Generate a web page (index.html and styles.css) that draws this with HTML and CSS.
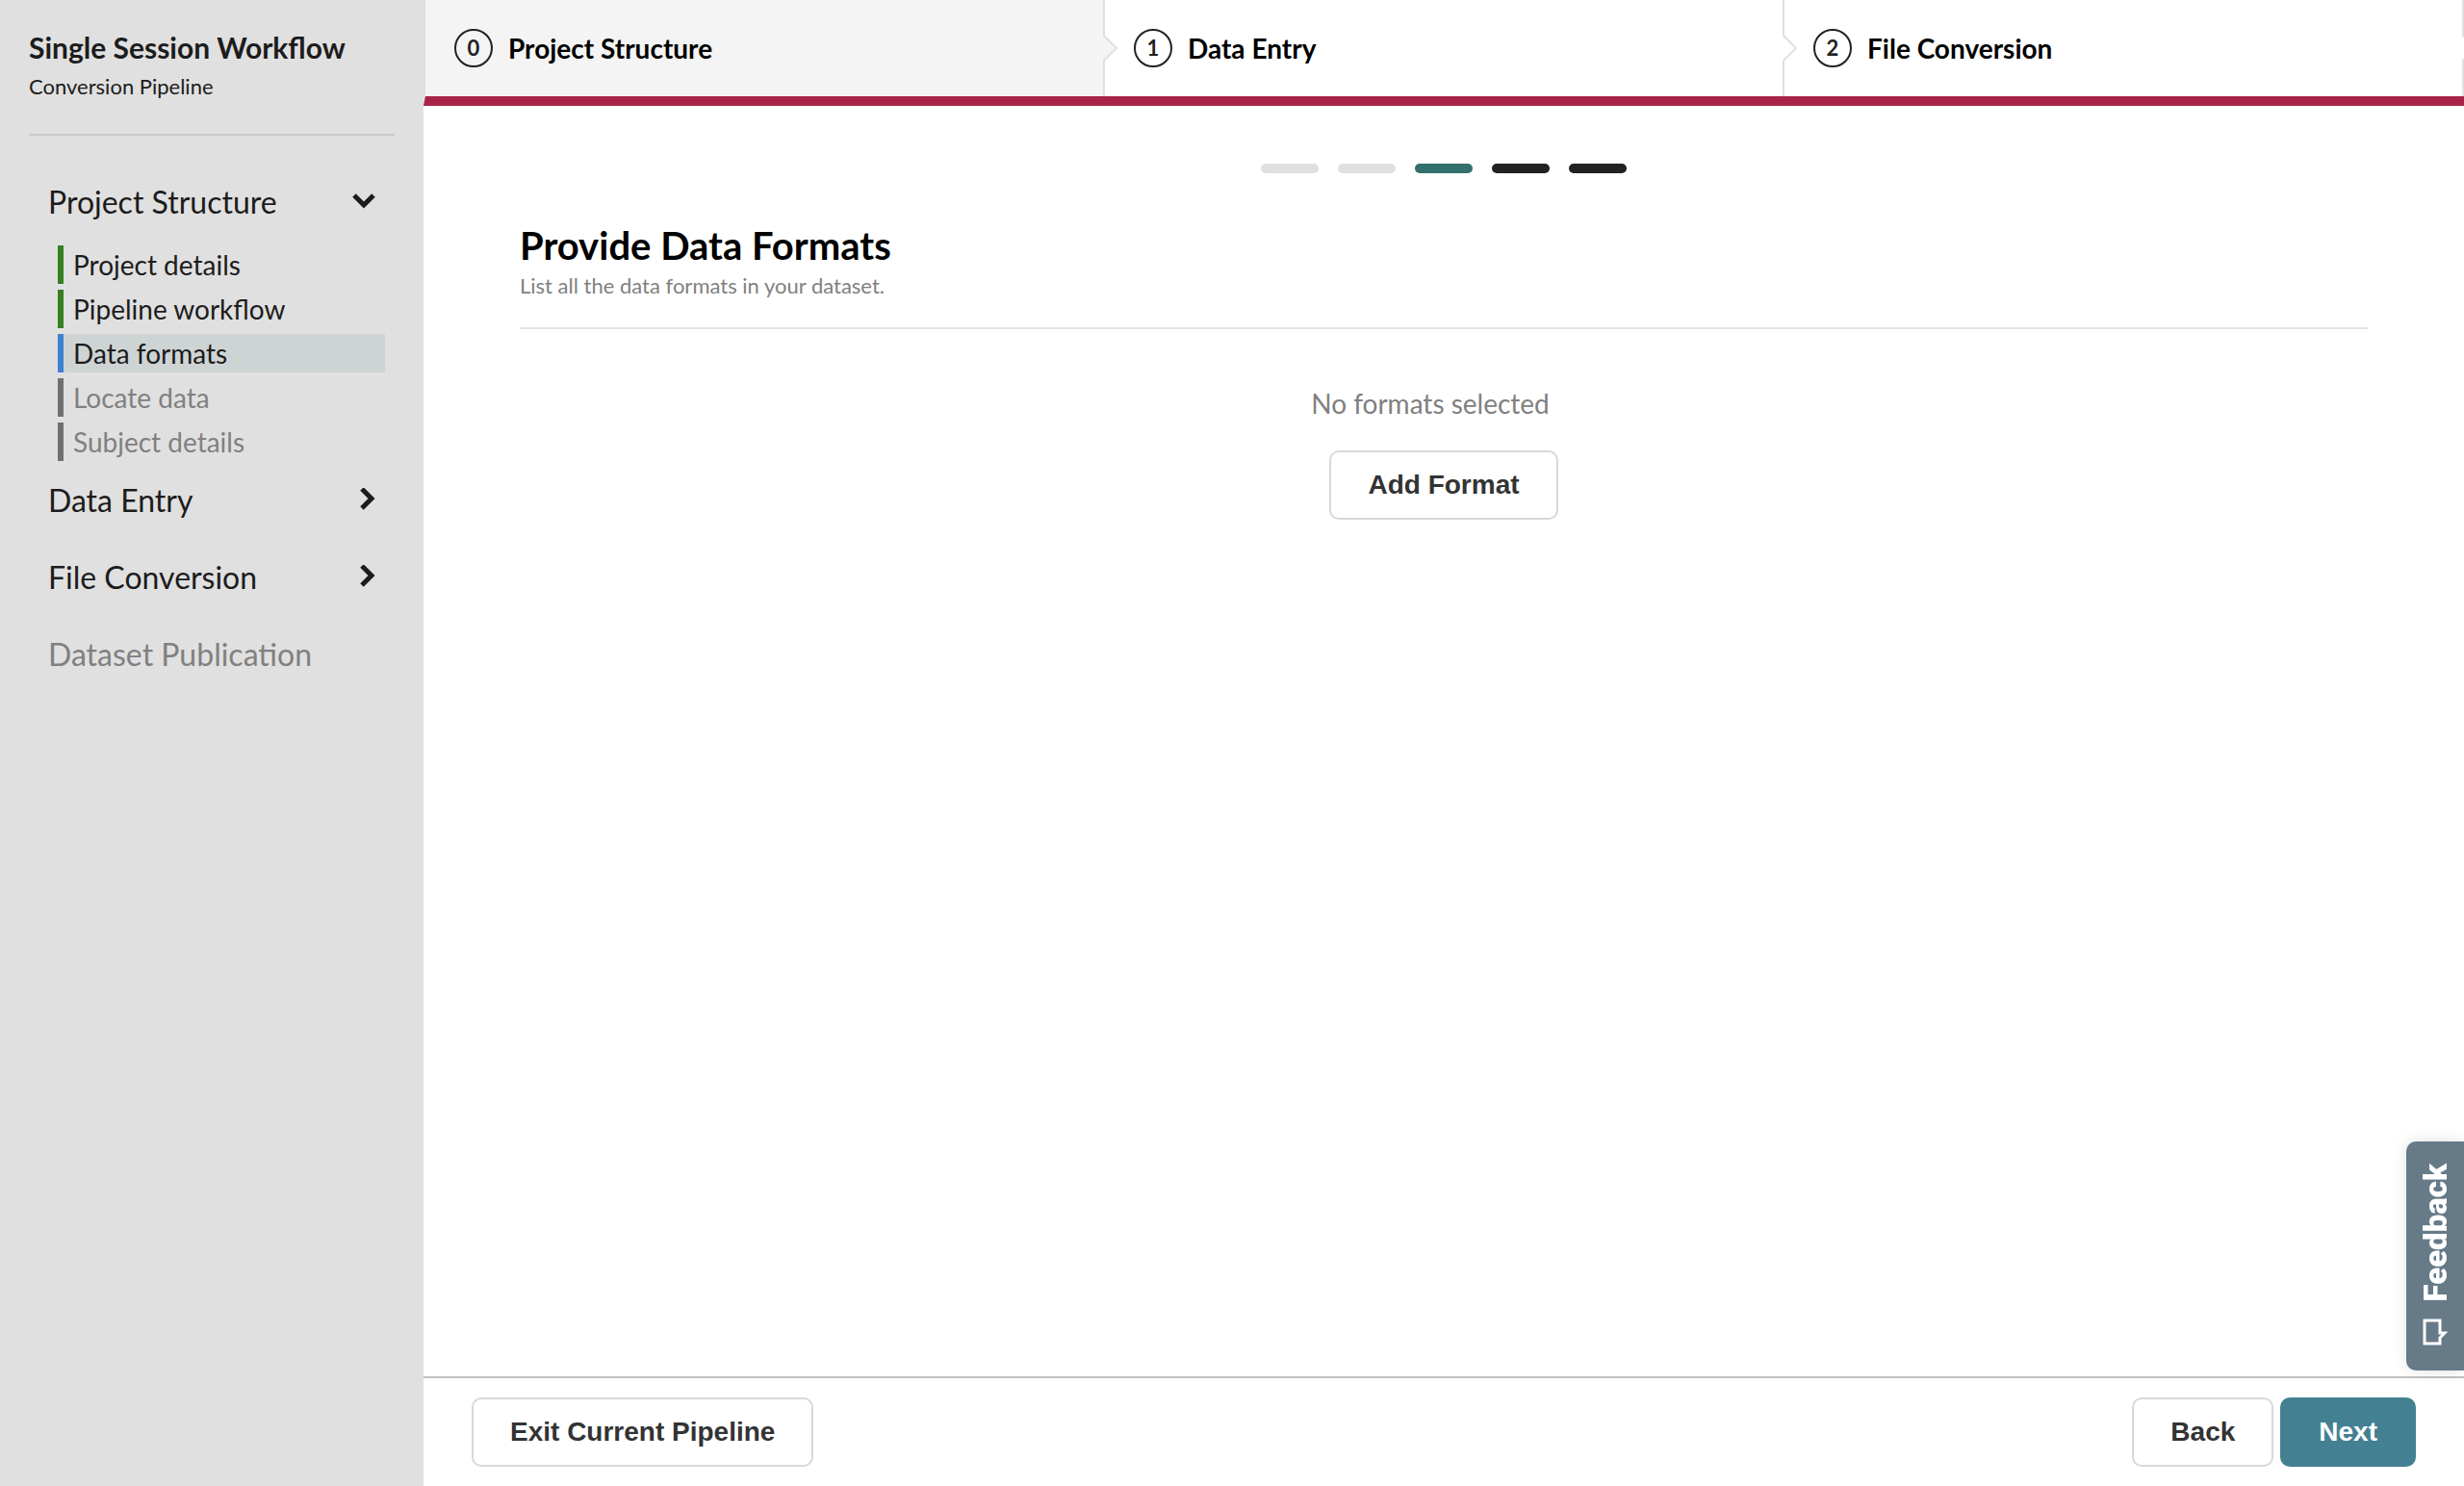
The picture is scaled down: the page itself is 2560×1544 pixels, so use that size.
FILE: index.html
```html
<!DOCTYPE html>
<html lang="en">

<head>
    <meta charset="UTF-8">
    <meta name="viewport" content="width=device-width, initial-scale=1.0">
    <title>Single Session Workflow</title>
    <link rel="stylesheet" href="styles.css">
</head>

<body>

    <aside class="sidebar">
        <header class="sidebar-header">
            <h1>Single Session Workflow</h1>
            <p>Conversion Pipeline</p>
        </header>

        <nav class="sidebar-nav">
            <button type="button" class="section" aria-expanded="true">
                Project Structure
                <svg class="chevron" width="24" height="24" viewBox="0 0 24 24"><path d="M2 6l10 10L22 6"/></svg>
            </button>
            <ul class="pages">
                <li><a href="#details" class="page done">Project details</a></li>
                <li><a href="#workflow" class="page done">Pipeline workflow</a></li>
                <li><a href="#formats" class="page active">Data formats</a></li>
                <li><a href="#locate" class="page locked">Locate data</a></li>
                <li><a href="#subjects" class="page locked">Subject details</a></li>
            </ul>
            <button type="button" class="section" aria-expanded="false">
                Data Entry
                <svg class="chevron" width="24" height="24" viewBox="0 0 24 24"><path d="M10 1l10 10-10 10"/></svg>
            </button>
            <button type="button" class="section" aria-expanded="false">
                File Conversion
                <svg class="chevron" width="24" height="24" viewBox="0 0 24 24"><path d="M10 1l10 10-10 10"/></svg>
            </button>
            <button type="button" class="section" disabled>Dataset Publication</button>
        </nav>
    </aside>

    <div class="content">
        <nav class="steps">
            <a href="#step-0" class="step current">
                <span class="step-number">0</span>
                Project Structure
                <svg class="step-arrow" width="16" height="32" viewBox="0 0 16 32"><path d="M0 2l14 14L0 30"/></svg>
            </a>
            <a href="#step-1" class="step">
                <span class="step-number">1</span>
                Data Entry
                <svg class="step-arrow" width="16" height="32" viewBox="0 0 16 32"><path d="M0 2l14 14L0 30"/></svg>
            </a>
            <a href="#step-2" class="step">
                <span class="step-number">2</span>
                File Conversion
                <svg class="step-arrow" width="16" height="32" viewBox="0 0 16 32"><path d="M0 2l14 14L0 30"/></svg>
            </a>
        </nav>

        <main class="main">
            <div class="dots">
                <span class="dot seen"></span>
                <span class="dot seen"></span>
                <span class="dot now"></span>
                <span class="dot"></span>
                <span class="dot"></span>
            </div>
            <div class="page-header">
                <h2>Provide Data Formats</h2>
                <p>List all the data formats in your dataset.</p>
            </div>
            <div class="formats">
                <p class="empty">No formats selected</p>
                <button type="button" class="btn">Add Format</button>
            </div>
        </main>

        <footer class="footer">
            <button type="button" class="btn">Exit Current Pipeline</button>
            <div class="footer-right">
                <button type="button" class="btn">Back</button>
                <button type="button" class="btn primary">Next</button>
            </div>
        </footer>
    </div>

    <button type="button" class="feedback">
        <svg width="26" height="28" viewBox="0 0 26 28"><path d="M2 2h16v13h5l-5 5v6H2z"/></svg>
        <span>Feedback</span>
    </button>

</body>

</html>
```
FILE: styles.css
```css
*{
    margin: 0;
    padding: 0;
    box-sizing: border-box;
}
body{
    display: flex;
    height: 100vh;
    overflow: hidden;
    font-family: Lato, "Open Sans", sans-serif;
    font-size: 28px;
    color: #1c1c1c;
    background: white;
}
a{
    color: inherit;
    text-decoration: none;
}
button{
    font: inherit;
    color: inherit;
    border: none;
    background: none;
    cursor: pointer;
}
svg{
    fill: none;
}

/* sidebar */
.sidebar{
    flex: 0 0 440px;
    padding: 30px;
    background: #e0e0e0;
}
.sidebar-header{
    padding-bottom: 27px;
    border-bottom: 2px solid #c8c8c8;
}
.sidebar-header h1{
    font-size: 30px;
    line-height: 38px;
}
.sidebar-header p{
    font-size: 22px;
    line-height: 44px;
}
.sidebar-nav{
    padding: 28px 20px;
}
.section{
    display: flex;
    justify-content: space-between;
    align-items: center;
    width: 100%;
    height: 80px;
    font-size: 32px;
}
.section:disabled{
    color: #808080;
}
.chevron{
    stroke: #1c1c1c;
    stroke-width: 5;
}
.pages{
    display: flex;
    flex-direction: column;
    gap: 6px;
    padding-top: 6px;
    margin: 0 -10px 0 10px;
    list-style: none;
}
.page{
    display: block;
    padding-left: 10px;
    border-left: 6px solid;
    line-height: 40px;
}
.page.done{
    border-color: #368022;
}
.page.active{
    border-color: #3c82d0;
    background: #ced4d4;
}
.page.locked{
    color: #808080;
    border-color: #707070;
}

/* content */
.content{
    flex: 1;
    display: flex;
    flex-direction: column;
    min-width: 0;
}
.steps{
    display: flex;
    border-left: 2px solid #e0e0e0;
    border-bottom: 10px solid #a72448;
}
.step{
    position: relative;
    flex: 1;
    display: flex;
    align-items: center;
    gap: 16px;
    height: 100px;
    padding: 0 30px;
    border-right: 2px solid #e0e0e0;
    font-weight: bold;
    color: black;
}
.step.current{
    background: #f4f4f4;
}
.step-number{
    width: 40px;
    height: 40px;
    border: 2px solid #222;
    border-radius: 50%;
    font-size: 22px;
    line-height: 36px;
    text-align: center;
    color: #222;
}
.step-arrow{
    position: absolute;
    z-index: 1;
    top: 34px;
    right: -16px;
    fill: white;
    stroke: #e0e0e0;
    stroke-width: 2;
}
.current .step-arrow{
    fill: #f4f4f4;
}
.main{
    flex: 1;
    padding: 60px 100px;
}
.dots{
    display: flex;
    justify-content: center;
    gap: 20px;
}
.dot{
    width: 60px;
    height: 10px;
    border-radius: 5px;
    background: #222;
}
.dot.seen{
    background: #e0e0e0;
}
.dot.now{
    background: #34706b;
}
.page-header{
    margin-top: 50px;
    padding-bottom: 26px;
    border-bottom: 2px solid #e4e4e4;
}
.page-header h2{
    font-size: 40px;
    line-height: 50px;
    color: black;
}
.page-header p{
    font-size: 22px;
    line-height: 34px;
    color: #808080;
}
.formats{
    display: flex;
    flex-direction: column;
    align-items: center;
    gap: 29px;
    padding-top: 57px;
}
.empty{
    padding-right: 28px;
    line-height: 40px;
    color: #808080;
}
.btn{
    height: 72px;
    padding: 0 38px;
    border: 2px solid #d8d8d8;
    border-radius: 10px;
    font-family: "Liberation Sans", Arial, sans-serif;
    font-weight: bold;
    color: #333;
    background: white;
}
.btn.primary{
    border-color: #438092;
    color: white;
    background: #438092;
}
.footer{
    display: flex;
    justify-content: space-between;
    padding: 20px 50px;
    border-top: 2px solid #c2c2c2;
}
.footer-right{
    display: flex;
    gap: 7px;
}

/* feedback tab on the right edge */
.feedback{
    position: fixed;
    right: 0;
    bottom: 120px;
    display: flex;
    flex-direction: column-reverse;
    align-items: center;
    gap: 17px;
    width: 60px;
    padding: 23px 0 26px;
    border-radius: 10px 0 0 10px;
    font-family: Roboto, sans-serif;
    font-size: 33px;
    font-weight: 900;
    color: white;
    background: #667a88;
    box-shadow: 0 0 16px rgba(0, 0, 0, 0.12);
}
.feedback span{
    writing-mode: vertical-rl;
    transform: rotate(180deg);
}
.feedback svg{
    stroke: white;
    stroke-width: 3;
}
```
